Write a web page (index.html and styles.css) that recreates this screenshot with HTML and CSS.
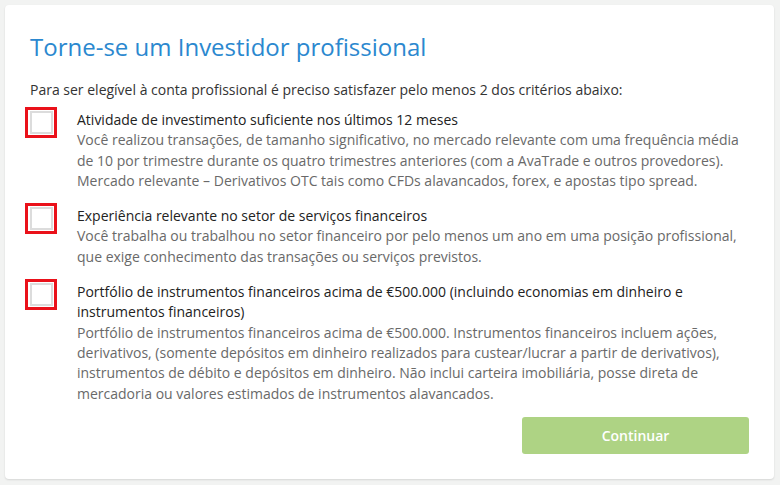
FILE: index.html
```html
<!DOCTYPE html>
<html lang="pt">
<head>
    <meta charset="UTF-8">
    <meta name="viewport" content="width=device-width, initial-scale=1.0">
    <title>Torne-se um Investidor profissional</title>
    <link rel="stylesheet" href="styles.css">
</head>
<body>
    <div class="card">
        <h1 class="title">Torne-se um Investidor profissional</h1>
        <p class="intro">Para ser elegível à conta profissional é preciso satisfazer pelo menos 2 dos critérios abaixo:</p>

        <!-- Critérios -->
        <div class="criteria">
            <label class="item">
                <span class="check-wrap"><span class="check"></span></span>
                <span class="item-text">
                    <span class="item-title">Atividade de investimento suficiente nos últimos 12 meses</span>
                    <span class="item-desc">Você realizou transações, de tamanho significativo, no mercado relevante com uma frequência média de 10 por trimestre durante os quatro trimestres anteriores (com a AvaTrade e outros provedores). Mercado relevante – Derivativos OTC tais como CFDs alavancados, forex, e apostas tipo spread.</span>
                </span>
            </label>
            <label class="item">
                <span class="check-wrap"><span class="check"></span></span>
                <span class="item-text">
                    <span class="item-title">Experiência relevante no setor de serviços financeiros</span>
                    <span class="item-desc">Você trabalha ou trabalhou no setor financeiro por pelo menos um ano em uma posição profissional, que exige conhecimento das transações ou serviços previstos.</span>
                </span>
            </label>
            <label class="item">
                <span class="check-wrap"><span class="check"></span></span>
                <span class="item-text">
                    <span class="item-title">Portfólio de instrumentos financeiros acima de €500.000 (incluindo economias em dinheiro e instrumentos financeiros)</span>
                    <span class="item-desc">Portfólio de instrumentos financeiros acima de €500.000. Instrumentos financeiros incluem ações, derivativos, (somente depósitos em dinheiro realizados para custear/lucrar a partir de derivativos), instrumentos de débito e depósitos em dinheiro. Não inclui carteira imobiliária, posse direta de mercadoria ou valores estimados de instrumentos alavancados.</span>
                </span>
            </label>
        </div>

        <div class="actions">
            <button class="btn" type="button">Continuar</button>
        </div>
    </div>
</body>
</html>
```

FILE: styles.css
```css
body {
    font-family: "Open Sans", Arial, sans-serif;
    margin: 0;
    padding: 5px 6px 6px 5px;
    background-color: #f2f3f2;
    color: #333;
}
.card {
    background-color: #ffffff;
    border-radius: 4px;
    box-shadow: 0 1px 2px rgba(0, 0, 0, 0.12);
    padding: 26px 25px 25px 25px;
    height: 474px;
    box-sizing: border-box;
    display: flex;
    flex-direction: column;
}
.title {
    margin: 0;
    font-size: 24px;
    line-height: 32px;
    font-weight: normal;
    color: #2b88cf;
}
.intro {
    margin: 17px 0 0 0;
    font-size: 14px;
    line-height: 20px;
    color: #333;
}
.criteria {
    display: flex;
    flex-direction: column;
    gap: 15px;
    margin-top: 10px;
}
.item {
    display: flex;
    gap: 20px;
    cursor: pointer;
}
.check-wrap {
    flex: none;
    width: 32px;
    height: 31px;
    margin: -3px 0 0 -5px;
    box-sizing: border-box;
    border: 3px solid #ea111a;
    display: flex;
    align-items: center;
    justify-content: center;
}
.check {
    width: 23px;
    height: 23px;
    box-sizing: border-box;
    border: 2px solid #dcdcdc;
    background-color: #fff;
}
.item-text {
    display: flex;
    flex-direction: column;
    font-size: 14px;
    line-height: 20.3px;
}
.item-title {
    color: #222;
}
.item-desc {
    color: #696969;
}
.actions {
    margin-top: auto;
    display: flex;
    justify-content: flex-end;
}
.btn {
    width: 227px;
    height: 37px;
    border: none;
    border-radius: 3px;
    background-color: #aed384;
    color: #fff;
    font-family: "Open Sans", Arial, sans-serif;
    font-size: 14px;
    font-weight: 600;
    cursor: pointer;
}
```
